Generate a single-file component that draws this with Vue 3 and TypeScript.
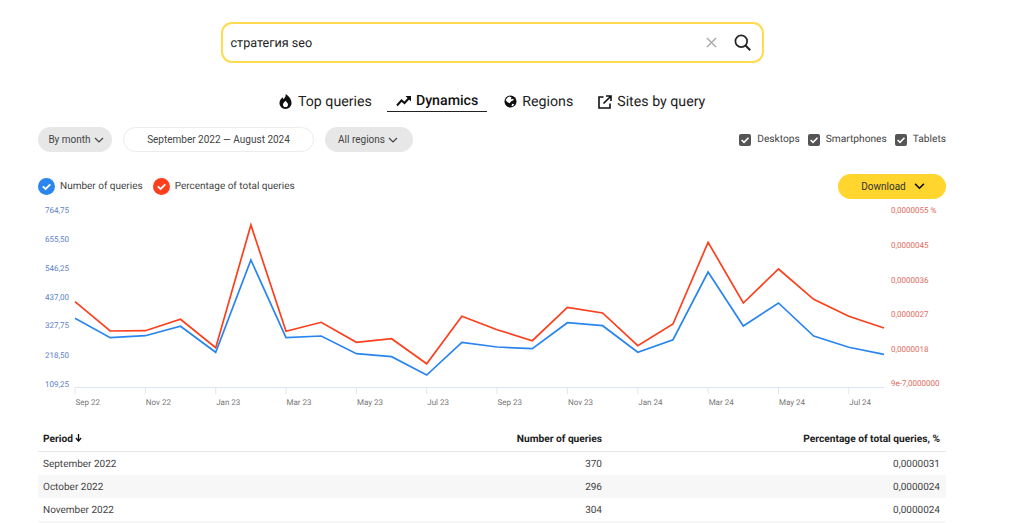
<script setup lang="ts">
const blueY = [318.3,337.7,335.7,326.3,352.3,260,337.7,336,353.7,356.7,375,342.3,347,348.7,322.7,325.7,352.3,339.7,272,326,303,336,347.3,354.3]
const redY = [301.7,331,330.7,319.3,347.7,225,331.3,322.3,342.3,338.7,363.7,316.3,329.7,340.7,307.3,313,345.7,324,242.3,303,269,299.3,316.3,328]
const step = (884 - 75) / 23
const toPoints = (ys: number[]) => ys.map((y, i) => `${(75 + i * step).toFixed(1)},${y}`).join(' ')
const bluePoints = toPoints(blueY)
const redPoints = toPoints(redY)
const ticks = ['Sep 22','Nov 22','Jan 23','Mar 23','May 23','Jul 23','Sep 23','Nov 23','Jan 24','Mar 24','May 24','Jul 24'].map((label, i) => ({ label, x: 75 + i * 2 * step }))
const left = [['764,75',210],['655,50',239],['546,25',268],['437,00',297],['327,75',325],['218,50',355],['109,25',384]] as [string, number][]
const right = [['0,0000055 %',210],['0,0000045',245],['0,0000036',279.5],['0,0000027',314],['0,0000018',348.5],['9e-7,0000000',383]] as [string, number][]
const devices = ['Desktops', 'Smartphones', 'Tablets']
const rows = [
  { period: 'September 2022', count: 370, share: '0,0000031' },
  { period: 'October 2022', count: 296, share: '0,0000024' },
  { period: 'November 2022', count: 304, share: '0,0000024' },
]
</script>

<template>
  <main class="page">
    <div class="search">
      <span class="query">стратегия seo</span>
      <svg class="clear" viewBox="0 0 12 12" width="11" height="11"><path d="M1 1l10 10M11 1L1 11" stroke="#a9a9a9" stroke-width="1.5" fill="none" /></svg>
      <svg class="loupe" viewBox="0 0 18 18" width="17" height="17"><circle cx="7.7" cy="7.7" r="6.2" stroke="#222" stroke-width="1.8" fill="none" /><path d="M12.2 12.2l5 5" stroke="#222" stroke-width="2" fill="none" /></svg>
    </div>

    <nav class="tabs">
      <a class="tab first">
        <svg viewBox="0 0 14 16" width="13" height="15"><path d="M7.2 0c.5 2.6-1 3.900-2.400 5.500-.4-.7-.6-1.300-.7-2.100C2 5 .5 7.200.5 9.700.5 13.300 3.400 16 7 16s6.500-2.700 6.500-6.300C13.500 5.500 10.500 2.200 7.200 0zM7 14c-1.500 0-2.700-1.100-2.700-2.600 0-1.400 1.100-2.400 2.700-4.200 1.600 1.800 2.700 2.800 2.700 4.200C9.700 12.900 8.500 14 7 14z" fill="#111" /></svg>
        Top queries
      </a>
      <a class="tab active">
        <svg viewBox="0 0 16 12" width="16" height="12"><path d="M1 10.500l4.500-5 3 2.500L14 2" stroke="#111" stroke-width="2" fill="none" /><path d="M9.500 1h5.500v5.500z" fill="#111" /></svg>
        Dynamics
      </a>
      <a class="tab">
        <svg viewBox="0 0 14 14" width="13" height="13"><circle cx="7" cy="7" r="6.500" fill="#111" /><path d="M5.500 1.500l2.500 1-.5 2 2.500-.5.500 1.500-3 1.500L6 9 3.500 7.500 1.800 5.500 3.500 3z M9 9.500l2 .5-1.500 2-1.500-.5z" fill="#fff" /></svg>
        Regions
      </a>
      <a class="tab">
        <svg viewBox="0 0 14 14" width="14" height="14"><path d="M5.500 2H1v11h11V8.500" stroke="#111" stroke-width="1.600" fill="none" /><path d="M5.500 8.500L12.500 1.500M8 1h5v5" stroke="#111" stroke-width="1.600" fill="none" /></svg>
        Sites by query
      </a>
    </nav>

    <section class="filters">
      <div class="filter-group">
        <button class="pill grey month">By month <svg class="chev" viewBox="0 0 10 6" width="10" height="6"><path d="M1 1l4 4 4-4" stroke="#444" stroke-width="1.200" fill="none" /></svg></button>
        <button class="pill date">September 2022 — August 2024</button>
        <button class="pill grey regions">All regions <svg class="chev" viewBox="0 0 10 6" width="10" height="6"><path d="M1 1l4 4 4-4" stroke="#444" stroke-width="1.200" fill="none" /></svg></button>
      </div>
      <div class="devices">
        <label v-for="d in devices" :key="d" class="device">
          <span class="box"><svg viewBox="0 0 12 12" width="12" height="12"><path d="M2.600 6l2.400 2.400 4.500-4.700" stroke="#fff" stroke-width="1.600" fill="none" /></svg></span>
          {{ d }}
        </label>
      </div>
    </section>

    <section class="legend-row">
      <div class="legend">
        <span class="legend-item">
          <span class="dot blue"><svg viewBox="0 0 17 17" width="17" height="17"><path d="M4.800 8.300l2.800 2.700 4.700-4.700" stroke="#fff" stroke-width="1.800" fill="none" /></svg></span>
          Number of queries
        </span>
        <span class="legend-item">
          <span class="dot red"><svg viewBox="0 0 17 17" width="17" height="17"><path d="M4.800 8.300l2.800 2.700 4.700-4.700" stroke="#fff" stroke-width="1.800" fill="none" /></svg></span>
          Percentage of total queries
        </span>
      </div>
      <button class="download">Download <svg viewBox="0 0 12 8" width="11" height="7"><path d="M1 1l5 5 5-5" stroke="#111" stroke-width="1.800" fill="none" /></svg></button>
    </section>

    <svg class="chart" viewBox="0 200 1024 212" width="1024" height="212">
      <text v-for="l in left" :key="l[0]" class="axis-left" x="45" :y="l[1] + 3">{{ l[0] }}</text>
      <text v-for="r in right" :key="r[0]" class="axis-right" x="891" :y="r[1] + 3">{{ r[0] }}</text>
      <path d="M75 387.500H884" stroke="#dfe5f2" stroke-width="1" fill="none" />
      <g v-for="t in ticks" :key="t.label">
        <path :d="`M${t.x} 387.500V394`" stroke="#dfe5f2" stroke-width="1" fill="none" />
        <text class="axis-x" :x="t.x + 0.500" y="405">{{ t.label }}</text>
      </g>
      <polyline :points="redPoints" fill="none" stroke="#fc3f1d" stroke-width="1.700" />
      <polyline :points="bluePoints" fill="none" stroke="#2a85ee" stroke-width="1.700" />
    </svg>

    <table class="data">
      <thead>
        <tr>
          <th class="period">Period <svg viewBox="0 0 8 9" width="7" height="8"><path d="M4 0v7M1 4.500L4 8l3-3.500" stroke="#111" stroke-width="1.500" fill="none" /></svg></th>
          <th class="count">Number of queries</th>
          <th class="share">Percentage of total queries, %</th>
        </tr>
      </thead>
      <tbody>
        <tr v-for="r in rows" :key="r.period">
          <td class="period">{{ r.period }}</td>
          <td class="count">{{ r.count }}</td>
          <td class="share">{{ r.share }}</td>
        </tr>
        <tr class="next"><td colspan="3"></td></tr>
      </tbody>
    </table>
  </main>
</template>

<style>
html, body { margin: 0; background: #fff; overflow: hidden; }
</style>

<style scoped>
.page {
  width: 1024px;
  height: 523px;
  overflow: hidden;
  padding-top: 22px;
  box-sizing: border-box;
  font-family: Roboto, "Noto Sans", sans-serif;
  text-rendering: geometricPrecision;
  color: #222;
  display: flex;
  flex-direction: column;
}
.page > * { flex: none; }
.search {
  box-sizing: border-box;
  width: 543px;
  height: 41px;
  margin-left: 220.500px;
  border: 2px solid #ffdb4d;
  border-radius: 11px;
  display: flex;
  align-items: center;
  padding: 0 11px 0 8px;
}
.query { flex: 1; font-size: 12.600px; color: #222; padding-top: 1px; }
.loupe { margin-left: 17px; }
.tabs {
  display: flex;
  margin: 27px 0 0 279px;
  height: 22px;
  gap: 25px;
}
.tab {
  display: flex;
  align-items: center;
  gap: 5px;
  font-size: 14.200px;
  color: #222;
  height: 22px;
  box-sizing: border-box;
  padding-top: 1px;
}
.tab.first { gap: 6px; margin-right: -2px; }
.tab.active {
  font-weight: 500;
  color: #111;
  border-bottom: 1px solid #222;
  gap: 4px;
  padding: 1px 9px 0;
  margin: 0 -8px;
}
.filters {
  display: flex;
  justify-content: space-between;
  align-items: center;
  margin: 15px 78px 0 38px;
  height: 25px;
}
.filter-group { display: flex; gap: 11px; }
.pill {
  height: 25px;
  border-radius: 13px;
  font: inherit;
  font-size: 10px;
  color: #444;
  border: 0;
  padding: 0;
  display: flex;
  align-items: center;
  justify-content: center;
  gap: 3px;
  box-sizing: border-box;
}
.grey { background: #e7e7e7; width: 74px; }
.month { padding-left: 2px; }
.regions { width: 88px; padding-right: 2px; }
.date { background: #fff; border: 1px solid #ececec; width: 191px; }
.devices { display: flex; gap: 8px; font-size: 10.200px; color: #444; }
.device { display: flex; align-items: center; gap: 6px; }
.box {
  width: 12px;
  height: 12px;
  border-radius: 2px;
  background: #555;
  display: flex;
}
.legend-row {
  display: flex;
  justify-content: space-between;
  align-items: center;
  margin: 22px 78px 0 38px;
  height: 25px;
}
.legend { display: flex; gap: 10px; font-size: 10px; color: #444; }
.legend-item { display: flex; align-items: center; gap: 5px; }
.dot { width: 17px; height: 17px; border-radius: 50%; display: flex; }
.dot.blue { background: #2a85ee; }
.dot.red { background: #fc3f1d; }
.download {
  width: 108px;
  height: 25px;
  border-radius: 13px;
  border: 0;
  background: #ffd52e;
  font: inherit;
  font-size: 10px;
  color: #333;
  display: flex;
  align-items: center;
  justify-content: center;
  gap: 8px;
  padding: 0 0 0 2px;
  box-sizing: border-box;
}
.chart { display: block; margin-top: 1px; }
.axis-left { font-size: 8px; fill: #5a80c8; }
.axis-right { font-size: 8px; fill: #dc6a5c; }
.axis-x { font-size: 8px; fill: #777; }
.data {
  margin: 15px 78px 0 38px;
  width: 908px;
  border-collapse: collapse;
  font-size: 10px;
}
.data th { height: 23px; padding: 1px 0 0; color: #222; font-weight: 700; font-size: 10.200px; border-bottom: 1px solid #e6e6e6; }
.data td { height: 22px; padding: 1px 0 0; color: #444; }
.period { text-align: left; padding-left: 5px !important; width: 380px; }
.count { text-align: right; width: 179px; }
.share { text-align: right; padding-right: 6px !important; }
tbody tr:nth-child(even) { background: #f7f7f7; }
</style>
